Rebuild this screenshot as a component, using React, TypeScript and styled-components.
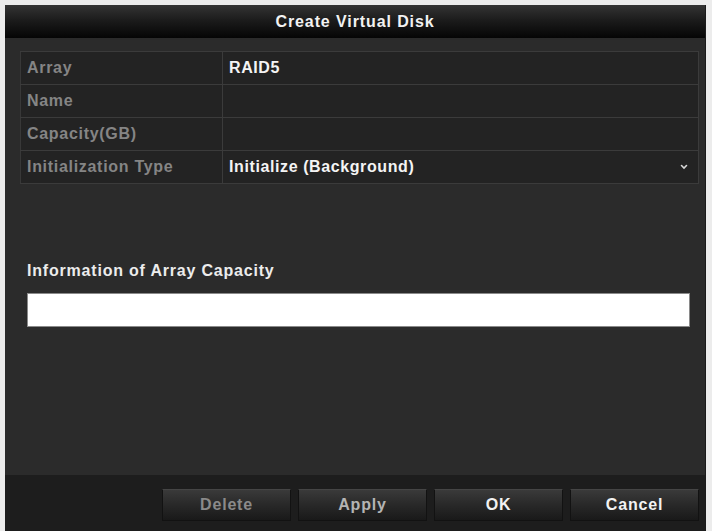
import styled, { createGlobalStyle } from "styled-components";

const GlobalStyle = createGlobalStyle`
  html, body {
    margin: 0;
    padding: 0;
    background: #ececec;
    font-family: "Liberation Sans", Arial, sans-serif;
  }
  * {
    box-sizing: border-box;
  }
`;

type Field = {
  label: string;
  value?: string;
  select?: boolean;
};

const fields: Field[] = [
  { label: "Array", value: "RAID5" },
  { label: "Name" },
  { label: "Capacity(GB)" },
  { label: "Initialization Type", value: "Initialize (Background)", select: true },
];

const buttons = [
  { label: "Delete", tone: "disabled" as const },
  { label: "Apply", tone: "dim" as const },
  { label: "OK", tone: "normal" as const },
  { label: "Cancel", tone: "normal" as const },
];

function Chevron() {
  return (
    <svg width="8" height="6" viewBox="0 0 8 6">
      <path d="M1.5 1.5 L4 4 L6.5 1.5" fill="none" stroke="#d8d8d8" strokeWidth="1.6" strokeLinecap="round" />
    </svg>
  );
}

function App() {
  return (
    <>
      <GlobalStyle />
      <Dialog>
        <TitleBar>Create Virtual Disk</TitleBar>
        <Body>
          <FieldTable>
            {fields.map((f) => (
              <FieldRow key={f.label}>
                <LabelCell>{f.label}</LabelCell>
                <ValueCell>
                  <span>{f.value ?? ""}</span>
                  {f.select && <Chevron />}
                </ValueCell>
              </FieldRow>
            ))}
          </FieldTable>
          <InfoSection>
            <InfoTitle>Information of Array Capacity</InfoTitle>
            <InfoBox />
          </InfoSection>
        </Body>
        <Footer>
          {buttons.map((b) => (
            <Button key={b.label} $tone={b.tone}>
              {b.label}
            </Button>
          ))}
        </Footer>
      </Dialog>
    </>
  );
}

const Dialog = styled.div`
  margin: 5px 6px 0 5px;
  height: 526px;
  display: flex;
  flex-direction: column;
  background: #2b2b2b;
  border-right: 1px solid #1a1a1a;
  overflow: hidden;
`;

const TitleBar = styled.div`
  height: 33px;
  flex-shrink: 0;
  display: flex;
  align-items: center;
  justify-content: center;
  background: linear-gradient(#343434 0%, #1c1c1c 45%, #050505 100%);
  color: #f2f2f2;
  font-size: 16px;
  font-weight: bold;
  letter-spacing: 0.9px;
`;

const Body = styled.div`
  flex: 1;
  padding: 13px 6px 0 15px;
  background: #2b2b2b;
`;

const FieldTable = styled.div`
  display: flex;
  flex-direction: column;
  border-top: 1px solid #3b3b3b;
`;

const FieldRow = styled.div`
  display: grid;
  grid-template-columns: 203px 1fr;
  height: 33px;
  border-bottom: 1px solid #3b3b3b;
`;

const LabelCell = styled.div`
  display: flex;
  align-items: center;
  padding-left: 6px;
  background: #232323;
  border-left: 1px solid #383838;
  border-right: 1px solid #3b3b3b;
  color: #858585;
  font-size: 16px;
  font-weight: bold;
  letter-spacing: 0.7px;
`;

const ValueCell = styled.div`
  display: flex;
  align-items: center;
  justify-content: space-between;
  padding: 0 10px 0 6px;
  background: #232323;
  border-right: 1px solid #3b3b3b;
  color: #f4f4f4;
  font-size: 16px;
  font-weight: bold;
  letter-spacing: 0.6px;
`;

const InfoSection = styled.div`
  margin: 77px 9px 0 7px;
  display: flex;
  flex-direction: column;
  gap: 12px;
`;

const InfoTitle = styled.div`
  color: #ececec;
  font-size: 16px;
  font-weight: bold;
  letter-spacing: 0.8px;
  line-height: 20px;
`;

const InfoBox = styled.div`
  height: 34px;
  background: #ffffff;
  border: 1px solid #8a8a8a;
`;

const Footer = styled.div`
  height: 56px;
  flex-shrink: 0;
  display: flex;
  justify-content: flex-end;
  align-items: flex-start;
  gap: 7px;
  padding: 14px 6px 0 0;
  background: #1d1d1d;
`;

const Button = styled.div<{ $tone: "disabled" | "dim" | "normal" }>`
  width: 129px;
  height: 32px;
  display: flex;
  align-items: center;
  justify-content: center;
  background: linear-gradient(#3a3a3a 0%, #2a2a2a 45%, #191919 100%);
  border: 1px solid #121212;
  border-top-color: #454545;
  font-size: 16px;
  font-weight: bold;
  letter-spacing: 0.8px;
  color: ${(p) => (p.$tone === "disabled" ? "#8a8a8a" : p.$tone === "dim" ? "#b4b4b4" : "#f2f2f2")};
`;

export default App;
